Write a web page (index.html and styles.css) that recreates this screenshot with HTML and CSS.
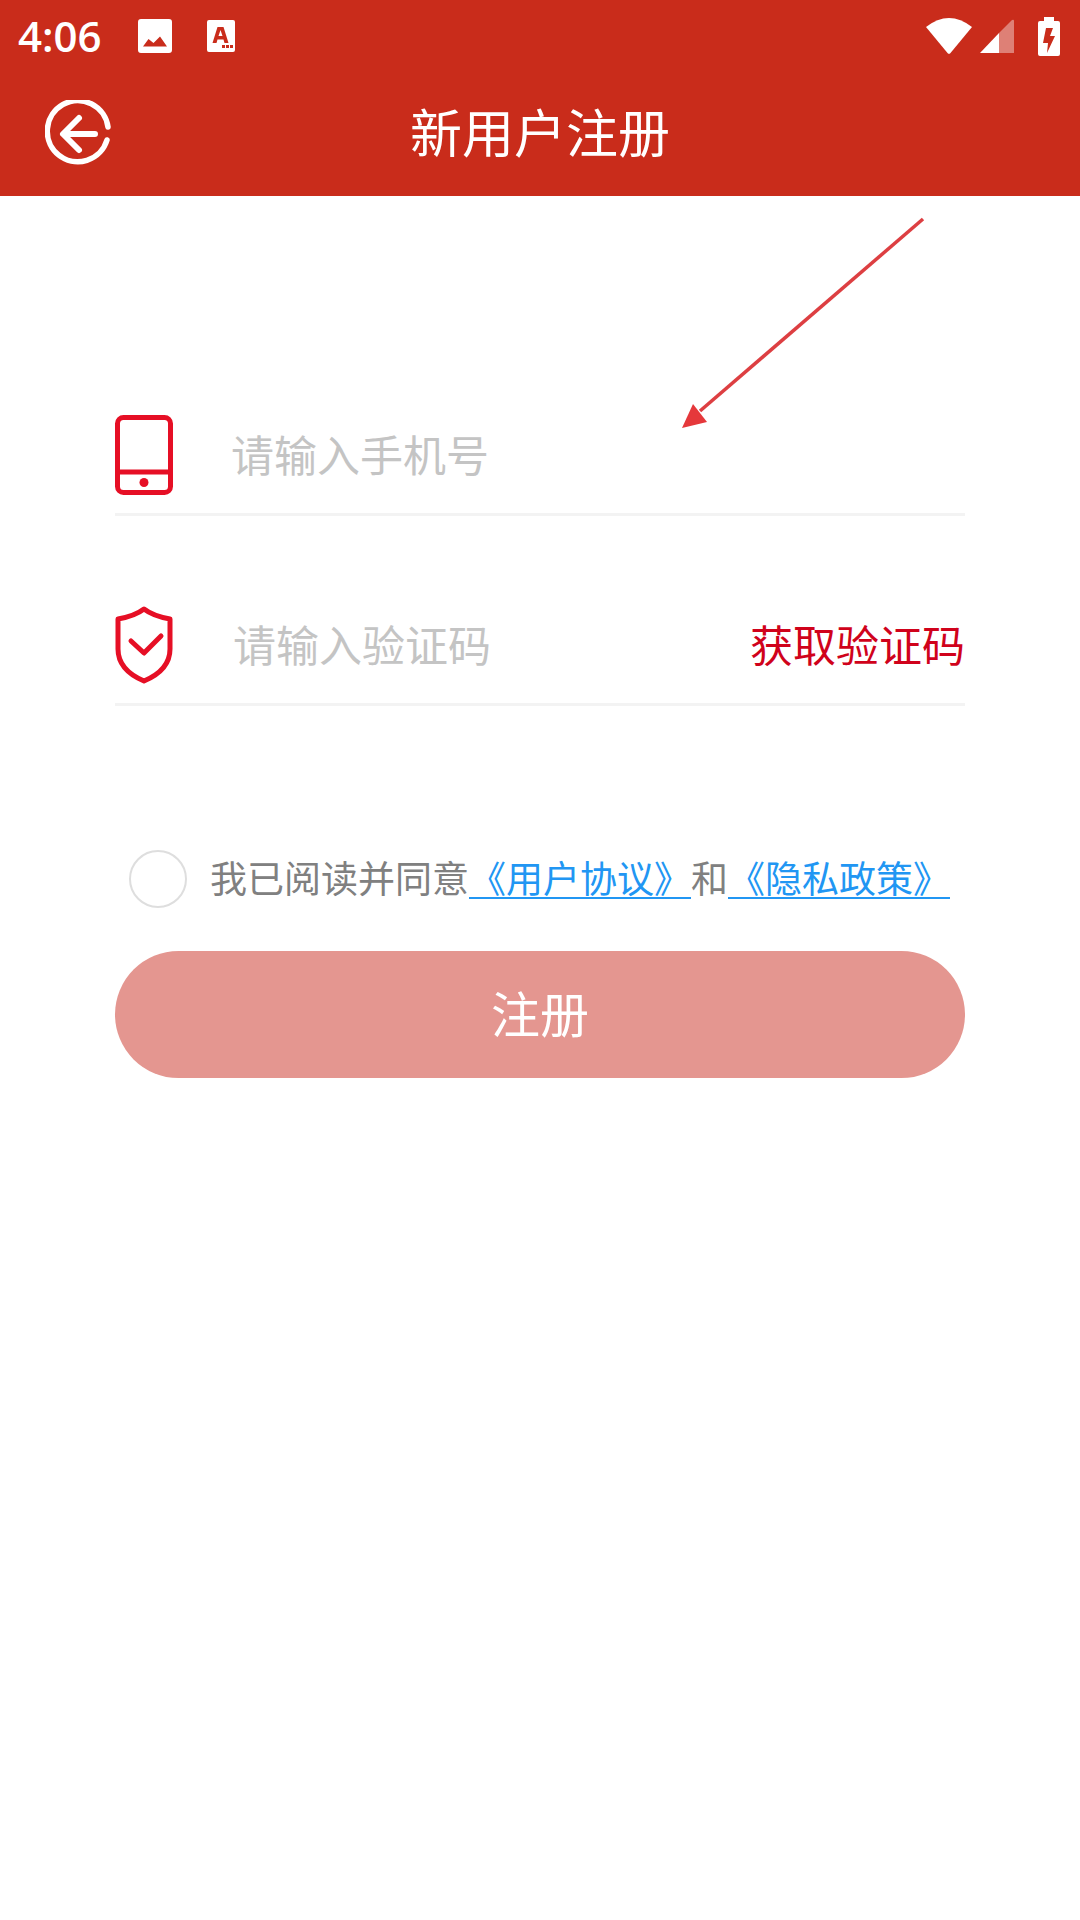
FILE: index.html
```html
<!DOCTYPE html>
<html lang="zh-CN">
<head>
  <meta charset="UTF-8">
  <meta content="width=device-width, initial-scale=1.0" name="viewport">
  <title>新用户注册</title>
  <link rel="stylesheet" href="styles.css">
</head>
<body>
<header class="top">
  <div class="status">
    <span class="time">4:06</span>
    <svg class="icon-image" viewBox="0 0 34 34" width="34" height="34">
      <path fill-rule="evenodd" fill="#fff" d="M3 0h28a3 3 0 0 1 3 3v28a3 3 0 0 1-3 3H3a3 3 0 0 1-3-3V3a3 3 0 0 1 3-3ZM5 27.500h24L22 17.500l-6.500 6.500-5-4Z"/>
    </svg>
    <svg class="icon-app" viewBox="0 0 28 32" width="28" height="32">
      <path fill-rule="evenodd" fill="#fff" d="M2 0h24a2 2 0 0 1 2 2v28a2 2 0 0 1-2 2H2a2 2 0 0 1-2-2V2a2 2 0 0 1 2-2ZM10.500 7 5.500 23h4l1-3.500h6l1 3.500h4L16.500 7ZM11.500 16l2-6 2 6Z"/>
      <path fill="#c92c1b" d="M15 25h3v3h-3ZM19 25h3v3h-3ZM23 25h3v3h-3Z"/>
    </svg>
    <span class="status-right">
      <svg viewBox="0 0 46 36" width="46" height="36">
        <path fill="#fff" d="M0 9Q23-9 46 9L24.500 35a2 2 0 0 1-3 0Z"/>
      </svg>
      <svg viewBox="0 0 34 34" width="34" height="34">
        <path fill="#fff" d="M19 14V34H0Z"/>
        <path fill="#fff" fill-opacity=".4" d="M19 14 32 1q2-1 2 1V34H19Z"/>
      </svg>
      <svg viewBox="0 0 22 39" width="22" height="39">
        <path fill-rule="evenodd" fill="#fff" d="M6 0h10v4h4a2 2 0 0 1 2 2v31a2 2 0 0 1-2 2H2a2 2 0 0 1-2-2V6a2 2 0 0 1 2-2h4ZM8 11l-3 15h5l-1 10 8-17h-5l3-8Z"/>
      </svg>
    </span>
  </div>
  <div class="toolbar">
    <svg class="back" viewBox="0 0 66 68" width="66" height="68">
      <path fill="none" stroke="#fff" stroke-width="5.500" stroke-linecap="round" d="M63 27A30.500 30.500 0 1 0 62 40"/>
      <path fill="none" stroke="#fff" stroke-width="6" stroke-linecap="round" stroke-linejoin="round" d="M50 34H19M34 18 18 34l16 16"/>
    </svg>
    <h1>新用户注册</h1>
  </div>
</header>

<main class="form">
  <!-- annotation from the screenshot -->
  <svg class="pointer" viewBox="0 0 250 220" width="250" height="220">
    <path stroke="#dd3f42" stroke-width="3.500" d="M243 3 20 195"/>
    <path fill="#e5383b" d="M2 212 13 188 27 206Z"/>
  </svg>

  <div class="field field-phone">
    <svg class="field-icon" viewBox="0 0 58 80" width="58" height="80">
      <rect x="2.500" y="2.500" width="53" height="75" rx="6" fill="none" stroke="#e60f25" stroke-width="5"/>
      <path stroke="#e60f25" stroke-width="5" d="M2 57H56"/>
      <circle cx="29" cy="67.500" r="4.500" fill="#e60f25"/>
    </svg>
    <span class="placeholder">请输入手机号</span>
  </div>

  <div class="field">
    <svg class="field-icon" viewBox="0 0 58 78" width="58" height="78">
      <path fill="none" stroke="#e60f25" stroke-width="5" stroke-linejoin="round" d="M29 3q9 7 26 10V43Q55 64 29 75 3 64 3 43V13Q20 10 29 3Z"/>
      <path fill="none" stroke="#e60f25" stroke-width="5" stroke-linecap="round" stroke-linejoin="round" d="M16 35 29 47 46 30"/>
    </svg>
    <span class="placeholder">请输入验证码</span>
    <span class="get-code">获取验证码</span>
  </div>

  <div class="agree">
    <span class="check"></span>
    <p>我已阅读并同意<a>《用户协议》</a>和<a>《隐私政策》</a></p>
  </div>

  <div class="submit">注册</div>
</main>
</body>
</html>
```

FILE: styles.css
```css
* {
  box-sizing: border-box;
}

body {
  background: #fff;
  font-family: "Noto Sans CJK SC", "Noto Sans", sans-serif;
  margin: 0;
  min-height: 1920px;
}

.top {
  background: #c92c1b;
  color: #fff;
  height: 196px;
}

.status {
  align-items: center;
  display: flex;
  height: 72px;
  padding: 0 20px 0 18px;
}

.time {
  font-family: "Open Sans", sans-serif;
  font-size: 42px;
  font-weight: 600;
  line-height: 72px;
  width: 120px;
}

.icon-image {
  margin-right: 35px;
}

.status-right {
  align-items: center;
  display: flex;
  gap: 8px;
  margin-left: auto;
}

.status-right svg:last-child {
  margin-left: 16px;
}

.toolbar {
  align-items: center;
  display: flex;
  height: 124px;
  justify-content: center;
  padding-bottom: 6px;
  position: relative;
}

.toolbar h1 {
  font-size: 52px;
  font-weight: 400;
  line-height: 1;
  margin: 0;
}

.back {
  left: 45px;
  position: absolute;
  top: 28px;
}

.form {
  padding: 200px 115px 0;
  position: relative;
}

.pointer {
  left: 680px;
  position: absolute;
  top: 20px;
}

.field {
  align-items: center;
  border-bottom: 3px solid #f3f3f3;
  display: flex;
  height: 120px;
}

.field + .field {
  margin-top: 70px;
}

.field-icon {
  flex: none;
  margin-right: 60px;
}

.field-phone .field-icon {
  margin-right: 58px;
}

.placeholder {
  color: #c4c4c4;
  font-size: 43px;
  margin-bottom: 3px;
}

.get-code {
  color: #d0021b;
  font-size: 43px;
  margin-bottom: 3px;
  margin-left: auto;
}

.agree {
  align-items: center;
  display: flex;
  margin-top: 144px;
  padding-left: 14px;
}

.check {
  border: 2px solid #dedede;
  border-radius: 50%;
  flex: none;
  height: 58px;
  margin-right: 23px;
  width: 58px;
}

.agree p {
  color: #808080;
  font-size: 37px;
  line-height: 58px;
  margin: -5px 0 0;
  white-space: nowrap;
}

.agree a {
  color: #2196f3;
  text-decoration: underline;
  text-decoration-thickness: 2px;
  text-underline-offset: 4px;
}

.submit {
  align-items: center;
  background: #e49690;
  border-radius: 64px;
  color: #fff;
  display: flex;
  font-size: 49px;
  height: 127px;
  justify-content: center;
  margin-top: 43px;
  padding-bottom: 6px;
}
```
